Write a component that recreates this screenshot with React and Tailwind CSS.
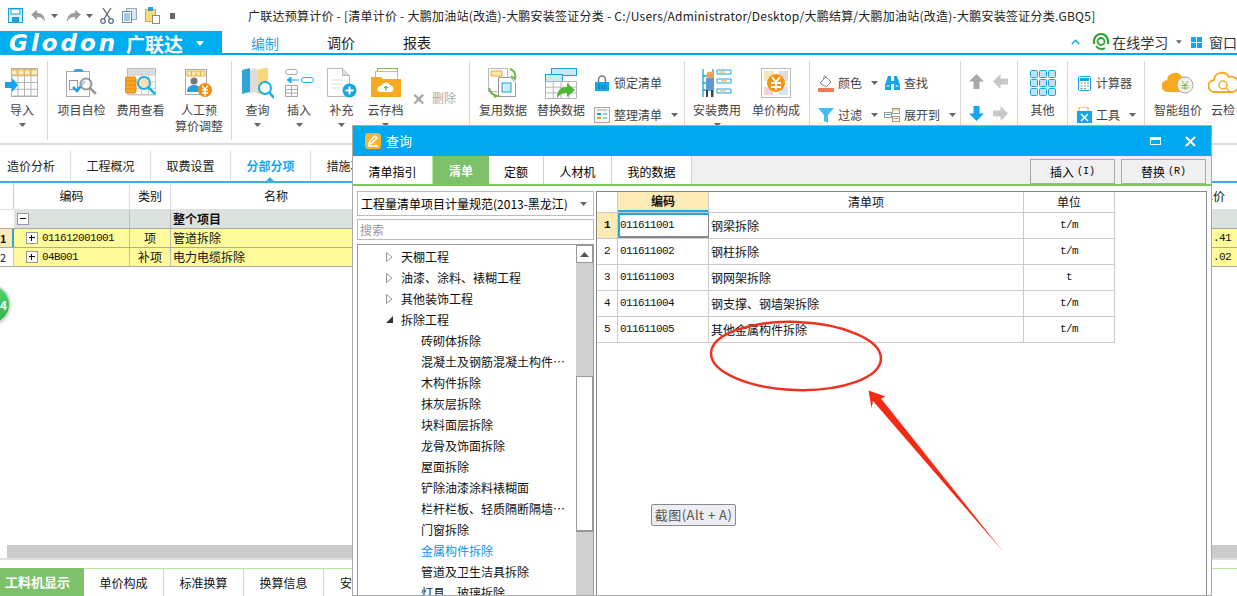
import React from 'react';

const cjk = { fontFamily: '"Noto Sans CJK SC", "Liberation Sans", sans-serif' };

const Caret = ({ className = '' }) => (
    <svg width="7" height="4" viewBox="0 0 7 4" className={className}><path d="M0 0h7L3.5 4z" fill="#666" /></svg>
);

// toolbar icons
const SaveIcon = () => (
    <svg width="15" height="15" viewBox="0 0 15 15"><rect x=".5" y=".5" width="14" height="14" fill="#d8f0fb" stroke="#19a3d8" /><rect x="3" y="1" width="9" height="5" fill="#fff" stroke="#19a3d8" /><rect x="4" y="9" width="7" height="5" fill="#19a3d8" /></svg>
);
const UndoIcon = ({ flip }) => (
    <svg width="15" height="12" viewBox="0 0 15 12" style={flip ? { transform: 'scaleX(-1)' } : undefined}><path d="M0 4.5 6 0v3c5 0 8 3 8 9-2-4-4-5-8-5v3z" fill="#9b9b9b" /></svg>
);
const ScissorsIcon = () => (
    <svg width="14" height="16" viewBox="0 0 14 16" fill="none" stroke="#56708f" strokeWidth="1.3"><path d="M3 0l7 11M11 0 4 11" stroke="#666" /><circle cx="3" cy="13" r="2.3" /><circle cx="11" cy="13" r="2.3" /></svg>
);
const CopyIcon = () => (
    <svg width="15" height="15" viewBox="0 0 15 15"><rect x="4.5" y=".5" width="10" height="11" fill="#d5eaf6" stroke="#9ab" /><rect x=".5" y="3.5" width="9" height="11" fill="#fff" stroke="#888" /><path d="M2 6h6M2 8h6M2 10h6M2 12h6" stroke="#2d9fd8" /></svg>
);
const PasteIcon = () => (
    <svg width="15" height="17" viewBox="0 0 15 17"><rect x=".5" y="2.5" width="10" height="12" fill="#fbd97a" stroke="#e2a730" /><rect x="3" y="0" width="5" height="4" fill="#2d9fd8" /><rect x="7.5" y="8.5" width="7" height="8" fill="#fff" stroke="#888" /></svg>
);

const GridLines = ({ x, y, w, h, cols, rows, stroke = '#b5b5b5' }) => {
    const lines = [];
    for (let i = 0; i <= cols; i++) lines.push(<path key={`c${i}`} d={`M${x + (w / cols) * i} ${y}v${h}`} stroke={stroke} />);
    for (let i = 0; i <= rows; i++) lines.push(<path key={`r${i}`} d={`M${x} ${y + (h / rows) * i}h${w}`} stroke={stroke} />);
    return <g>{lines}</g>;
};

const Magnifier = ({ cx, cy, r = 6, color = '#1ab0ec' }) => (
    <g fill="none"><circle cx={cx} cy={cy} r={r} stroke={color} strokeWidth="2" fill="#fff" fillOpacity=".6" /><path d={`M${cx + r * 0.7} ${cy + r * 0.7}l6 6`} stroke={color} strokeWidth="2.5" /></g>
);

const ImportIcon = () => (
    <svg width="34" height="30" viewBox="0 0 34 30"><rect x="6.5" y=".5" width="26" height="28" fill="#fff" stroke="#a8a8a8" /><rect x="7" y="1" width="25" height="7" fill="#fdeec0" /><GridLines x={6.5} y={1} w={26} h={27} cols={4} rows={4} /><path d="M7 2h25M12 2v5M19 2v5M25 2v5M7 7h25" stroke="#f0b040" /><path d="M0 14h7v-4l6 7-6 7v-4H0z" fill="#12a4ee" /></svg>
);
const CheckIcon = () => (
    <svg width="32" height="30" viewBox="0 0 32 30"><rect x=".5" y="3.5" width="23" height="25" fill="#fff" stroke="#aaa" /><path d="M9 1h7l2 3H7z" fill="#3aa8dc" /><rect x="3.5" y="12.5" width="8" height="9" fill="none" stroke="#999" /><path d="M7 19l4 4 8-10" stroke="#14a0dc" strokeWidth="2.5" fill="none" /><Magnifier cx={20} cy={16} r={5.5} color="#999" /></svg>
);
const FeeIcon = () => (
    <svg width="32" height="30" viewBox="0 0 32 30"><rect x="2.5" y=".5" width="28" height="26" fill="#fff" stroke="#bbb" /><rect x="3" y="1" width="27" height="6" fill="#ddd" /><GridLines x={2.5} y={7} w={28} h={20} cols={4} rows={3} stroke="#ccc" /><rect x="0" y="9" width="11" height="16" rx="2" fill="#f7a823" stroke="#dd8a10" /><path d="M0 13h11M0 17h11M0 21h11" stroke="#dd8a10" /><circle cx="19" cy="15" r="6" fill="#ffe0b0" stroke="#1ab0ec" strokeWidth="2" /><path d="M23 19l7 7" stroke="#1ab0ec" strokeWidth="2.5" /></svg>
);
const LaborIcon = () => (
    <svg width="28" height="30" viewBox="0 0 28 30"><rect x=".5" y="1.5" width="21" height="25" fill="#fff" stroke="#aaa" /><path d="M2 3h18v5H2z" fill="#fde8b0" /><GridLines x={2} y={3} w={18} h={5} cols={4} rows={1} stroke="#eeb040" /><circle cx="9" cy="13" r="3.5" fill="#777" /><path d="M2 24c0-5 3-7 7-7s7 2 7 7z" fill="#2b9fd8" /><circle cx="20" cy="22" r="7" fill="#f58a12" /><path d="M17 17.500l3 4 3-4M17 22h6M17 25h6M20 21v7" stroke="#fff" strokeWidth="1.300" fill="none" /></svg>
);
const QueryIcon = () => (
    <svg width="32" height="32" viewBox="0 0 32 32"><path d="M0 3l8-2v24l-8 2z" fill="#2ca7d8" /><path d="M8 3c3-2 6-2 8 0v24c-2-2-5-2-8 0z" fill="#ddd" /><path d="M16 3c3-2 7-2 10-2v25c-3 0-7 0-10 1z" fill="#fad77a" /><circle cx="23" cy="21" r="6" fill="#fff" stroke="#1ab0ec" strokeWidth="2" /><path d="M27 25l5 6" stroke="#1ab0ec" strokeWidth="2.5" /></svg>
);
const InsertIcon = () => (
    <svg width="30" height="30" viewBox="0 0 30 30"><rect x="1.500" y="1.500" width="12" height="5" rx="2.500" fill="#fff" stroke="#aaa" /><rect x="17.500" y="9.500" width="12" height="5" rx="2.500" fill="#fff" stroke="#1ab0ec" /><path d="M15 12H7V9l-4 3 4 3v-3" fill="#1ab0ec" stroke="#1ab0ec" /><rect x="1.500" y="17.500" width="12" height="11" fill="#fff" stroke="#aaa" /><path d="M1.500 21.500h12M1.500 25h12M7.500 17.500v11" stroke="#aaa" /></svg>
);
const AddIcon = () => (
    <svg width="30" height="30" viewBox="0 0 30 30"><path d="M.5.5h15l7 7v21H.5z" fill="#fff" stroke="#bbb" /><path d="M15.500.5v7h7" fill="#ddd" stroke="#bbb" /><path d="M4 12h12M4 16h12M4 20h8" stroke="#ddd" /><circle cx="22.500" cy="22.500" r="7" fill="#18a5e4" /><path d="M18.500 22.500h8M22.500 18.500v8" stroke="#fff" strokeWidth="2" /></svg>
);
const CloudFolderIcon = () => (
    <svg width="30" height="30" viewBox="0 0 30 30"><rect x="6.500" y=".5" width="20" height="12" fill="#fff" stroke="#8bb04c" /><rect x="4.500" y="3.500" width="22" height="12" fill="#fff" stroke="#e2c050" /><path d="M0 9h10l2 2h18v18H0z" fill="#f7aa20" /><path d="M9 24a3 3 0 0 1 1-6 5 5 0 0 1 9-1 4 4 0 0 1 2 7z" fill="#fff" /><path d="M15 23v-5M13 20l2-2 2 2" stroke="#3aa83a" fill="none" /></svg>
);
const ReuseIcon = () => (
    <svg width="30" height="30" viewBox="0 0 30 30"><rect x=".5" y=".5" width="19" height="23" fill="#fff" stroke="#bbb" /><path d="M3 3h11v5H3z" fill="#fde8b0" stroke="#eeaa30" /><path d="M10.500 9.500h12l5 5v14h-17z" fill="#fff" stroke="#999" /><rect x="14" y="15" width="9" height="9" fill="#cdeefc" stroke="#18a0dc" /><path d="M22 1c5 2 6 6 5 10l-4-3" fill="none" stroke="#6cb84a" strokeWidth="2" /><path d="M1 20c1 5 4 7 8 8l-3 1" fill="none" stroke="#6cb84a" strokeWidth="2" /></svg>
);
const ReplaceIcon = () => (
    <svg width="32" height="31" viewBox="0 0 32 31"><rect x="6.500" y=".5" width="25" height="7" fill="#c5ecfb" stroke="#18a0dc" /><rect x=".5" y="6.500" width="17" height="7" fill="#c5ecfb" stroke="#18a0dc" /><GridLines x={.5} y={13.500} w={31} h={17} cols={4} rows={3} stroke="#b5b5b5" /><path d="M12 30c0-8 4-11 10-11v-4l8 7-8 7v-4c-4 0-7 1-10 5z" fill="#4cb534" /></svg>
);
const LockIcon = () => (
    <svg width="14" height="16" viewBox="0 0 14 16"><path d="M3.500 7V4.500a3.500 3.500 0 0 1 7 0V7" fill="none" stroke="#777" strokeWidth="1.500" /><rect y="7" width="14" height="9" fill="#12a8ee" /><path d="M3 11h8M3 13h8" stroke="#0b6fa0" strokeDasharray="2 1" /></svg>
);
const TidyIcon = () => (
    <svg width="16" height="16" viewBox="0 0 16 16"><rect x=".5" y=".5" width="15" height="15" fill="#f7f7f0" stroke="#aaa" /><path d="M3 3h10" stroke="#aaa" /><rect x="3" y="6" width="4" height="2" fill="#18a0dc" /><rect x="3" y="10" width="4" height="2" fill="#f0a020" /><path d="M9 7h4M9 11h4" stroke="#18a0dc" /></svg>
);
const InstallIcon = () => (
    <svg width="30" height="30" viewBox="0 0 30 30"><path d="M1 1v28M11 1v28M1 8h10M1 15h10M1 22h10" stroke="#18a5e4" strokeWidth="1.300" /><circle cx="8" cy="7" r="3.500" fill="#f0a050" /><rect x="4" y="10" width="8" height="12" fill="#5b9bd0" /><path d="M5 22v7M10 22v7" stroke="#345" strokeWidth="2" /><path d="M15 2h14v4H15zM15 11h14v4H15zM15 21h14v4H15z" fill="#fff" stroke="#18a5e4" /><path d="M17 4h6M19 13h6M18 23h6" stroke="#f0a020" /></svg>
);
const PriceIcon = () => (
    <svg width="30" height="30" viewBox="0 0 30 30"><rect x=".5" y=".5" width="29" height="29" fill="#fff" stroke="#bbb" /><rect x="3" y="3" width="10" height="10" fill="#f2e8c0" /><rect x="18" y="3" width="9" height="10" fill="#dcdcdc" /><rect x="3" y="19" width="9" height="8" fill="#f4d4d0" /><rect x="18" y="19" width="9" height="8" fill="#cfe6f4" /><circle cx="15" cy="15" r="9" fill="#f7920f" /><path d="M11 9l4 5 4-5M10 15h10M10 19h10M15 14v8" stroke="#fff" strokeWidth="1.800" fill="none" /></svg>
);
const BucketIcon = () => (
    <svg width="16" height="17" viewBox="0 0 16 17"><path d="M2 8l6-6 5 5-5 5z" fill="#fff" stroke="#888" /><path d="M8 2C7 0 5 1 6 4" stroke="#888" fill="none" /><rect y="13" width="16" height="4" fill="#f07b52" /></svg>
);
const BinocularIcon = () => (
    <svg width="15" height="14" viewBox="0 0 15 14"><path d="M3 0h3v5h3V0h3l3 9v5H9V8H6v6H0V9z" fill="#18a5e4" /><path d="M1.500 10h3M10.500 10h3" stroke="#fff" /></svg>
);
const FilterIcon = () => (
    <svg width="16" height="15" viewBox="0 0 16 15"><path d="M0 0h16l-6 7v8l-4-2V7z" fill="#44c0ee" /></svg>
);
const ExpandIcon = () => (
    <svg width="16" height="14" viewBox="0 0 16 14"><rect x="8.500" y=".5" width="7" height="5" fill="#fff" stroke="#999" /><rect x=".5" y="4.500" width="7" height="5" fill="#fff" stroke="#999" /><rect x="8.500" y="8.500" width="7" height="5" fill="#fff" stroke="#999" /><path d="M9.500 2h5M9.500 10.500h5" stroke="#f0a020" /><path d="M1.500 6.500h5" stroke="#18a5e4" /></svg>
);
const ArrowIcon = ({ dir, color }) => {
    const rotate = { up: 'rotate-0', down: 'rotate-180', left: '-rotate-90', right: 'rotate-90' }[dir];
    return <svg width="15" height="15" viewBox="0 0 15 15" className={rotate}><path d="M7.500 0 15 7.500h-4.500V15h-6V7.500H0z" fill={color} /></svg>;
};
const OtherIcon = () => (
    <svg width="26" height="26" viewBox="0 0 26 26">
        {[0, 9, 18].map(y => [0, 9, 18].map(x => (
            <rect key={`${x}-${y}`} x={x + .5} y={y + .5} width="7" height="7" rx="1" fill="#bfe4f6" stroke="#18a5e4" />
        )))}
    </svg>
);
const CalcIcon = () => (
    <svg width="13" height="15" viewBox="0 0 13 15"><rect x=".5" y=".5" width="12" height="14" rx="1" fill="#fff" stroke="#18a5e4" /><rect x="2" y="2" width="9" height="3" fill="#18a5e4" /><path d="M2.500 7h2M6 7h2M9 7h2M2.500 10h2M6 10h2M9 10h2M2.500 12.500h2M6 12.500h2" stroke="#888" /></svg>
);
const ToolIcon = () => (
    <svg width="15" height="16" viewBox="0 0 15 16"><rect x="2" y="0" width="9" height="6" fill="#fff" stroke="#f0a020" /><rect y="4" width="15" height="12" fill="#18a5e4" /><path d="M4 7l7 7M11 7l-7 7" stroke="#fff" strokeWidth="1.500" /></svg>
);
const CloudYenIcon = () => (
    <svg width="32" height="24" viewBox="0 0 32 24"><path d="M6 21a6 6 0 0 1-1-12 8 8 0 0 1 15-3 7 7 0 0 1 4 15z" fill="#f7aa20" /><circle cx="23" cy="14" r="8" fill="#f2f2ea" stroke="#aaa" /><path d="M20 10l3 4 3-4M19.500 14.500h7M19.500 17h7M23 14v5" stroke="#7ab648" fill="none" /></svg>
);
const CloudCheckIcon = () => (
    <svg width="30" height="24" viewBox="0 0 30 24" fill="none"><path d="M7 21a6 6 0 0 1-1-12 8 8 0 0 1 15-3 7 7 0 0 1 4 15z" stroke="#f7aa20" strokeWidth="1.800" /><circle cx="15" cy="14" r="4" stroke="#f7aa20" strokeWidth="1.500" /><path d="M18 17l4 4" stroke="#f7aa20" strokeWidth="1.500" /></svg>
);
const HeadsetIcon = () => (
    <svg width="18" height="18" viewBox="0 0 18 18" fill="none"><path d="M2 11V8a7 7 0 0 1 14 0v3" stroke="#2fa52f" strokeWidth="2.200" /><circle cx="9" cy="8.500" r="3.500" stroke="#2fa52f" strokeWidth="1.800" /><path d="M4 13c2 3 6 4 9 2" stroke="#2fa52f" strokeWidth="2" /></svg>
);
const WindowsIcon = () => (
    <svg width="11" height="11" viewBox="0 0 11 11"><path d="M0 0h5v5H0zM6 0h5v5H6zM0 6h5v5H0zM6 6h5v5H6z" fill="#12a4ee" /></svg>
);

const Large = ({ icon, label, label2, caret, w }) => (
    <div className={`${w} flex flex-col items-center shrink-0`}>
        <div className="h-[36px] flex items-center justify-center">{icon}</div>
        <div className="text-[12px] leading-[16px] mt-[1px] text-[#444] whitespace-nowrap">{label}</div>
        {label2 && <div className="text-[12px] leading-[16px] text-[#444] whitespace-nowrap">{label2}</div>}
        {caret && <Caret className="mt-[5px]" />}
    </div>
);

const Small = ({ icon, label, caret, w }) => (
    <div className={`${w} h-[24px] flex items-center text-[12px] text-[#444] whitespace-nowrap`}>
        <div className="w-[18px] flex justify-center shrink-0">{icon}</div>
        <span className="ml-[3px]">{label}</span>
        {caret && <Caret className="ml-[9px]" />}
    </div>
);

const Group = ({ w, children }) => (
    <div className={`${w} h-[79px] border-r border-[#d8d8d8] flex shrink-0 mt-[6px] pt-[4px]`}>{children}</div>
);

const Ribbon = () => (
    <div className="h-[90px] flex border-b-2 border-[#dcdcdc] shrink-0">
        <Group w="w-[48px]"><Large w="w-[44px]" icon={<ImportIcon />} label="导入" caret /></Group>
        <Group w="w-[184px]">
            <div className="w-[4px]" />
            <Large w="w-[59px]" icon={<CheckIcon />} label="项目自检" />
            <Large w="w-[59px]" icon={<FeeIcon />} label="费用查看" />
            <Large w="w-[58px]" icon={<LaborIcon />} label="人工预" label2="算价调整" />
        </Group>
        <Group w="w-[238px]">
            <div className="w-[5px]" />
            <Large w="w-[41px]" icon={<QueryIcon />} label="查询" caret />
            <Large w="w-[42px]" icon={<InsertIcon />} label="插入" caret />
            <Large w="w-[43px]" icon={<AddIcon />} label="补充" caret />
            <Large w="w-[45px]" icon={<CloudFolderIcon />} label="云存档" caret />
            <div className="pl-[4px] pt-[16px] h-[50px] flex items-center text-[12px] text-[#aaa] whitespace-nowrap">
                <span className="text-[16px] font-bold text-[#aaa] leading-none mr-[7px]">✕</span>删除
            </div>
        </Group>
        <Group w="w-[215px]">
            <div className="w-[4px]" />
            <Large w="w-[58px]" icon={<ReuseIcon />} label="复用数据" />
            <Large w="w-[58px]" icon={<ReplaceIcon />} label="替换数据" />
            <div className="flex flex-col gap-[8px] pt-[6px] pl-[3px]">
                <Small w="w-[90px]" icon={<LockIcon />} label="锁定清单" />
                <Small w="w-[90px]" icon={<TidyIcon />} label="整理清单" caret />
            </div>
        </Group>
        <Group w="w-[125px]">
            <div className="w-[3px]" />
            <Large w="w-[58px]" icon={<InstallIcon />} label="安装费用" caret />
            <Large w="w-[60px]" icon={<PriceIcon />} label="单价构成" />
        </Group>
        <Group w="w-[151px]">
            <div className="w-[7px]" />
            <div className="flex flex-col gap-[8px] pt-[6px]">
                <Small w="w-[66px]" icon={<BucketIcon />} label="颜色" caret />
                <Small w="w-[66px]" icon={<FilterIcon />} label="过滤" caret />
            </div>
            <div className="flex flex-col gap-[8px] pt-[6px]">
                <Small w="w-[76px]" icon={<BinocularIcon />} label="查找" />
                <Small w="w-[76px]" icon={<ExpandIcon />} label="展开到" caret />
            </div>
        </Group>
        <Group w="w-[57px]">
            <div className="grid grid-cols-2 gap-x-[9px] gap-y-[17px] pl-[8px] pt-[9px] h-fit">
                <ArrowIcon dir="up" color="#a8a8a8" />
                <ArrowIcon dir="left" color="#c8c8c8" />
                <ArrowIcon dir="down" color="#12a4ee" />
                <ArrowIcon dir="right" color="#c8c8c8" />
            </div>
        </Group>
        <Group w="w-[50px]"><Large w="w-[49px]" icon={<OtherIcon />} label="其他" /></Group>
        <Group w="w-[77px]">
            <div className="w-[7px]" />
            <div className="flex flex-col gap-[8px] pt-[6px]">
                <Small w="w-[68px]" icon={<CalcIcon />} label="计算器" />
                <Small w="w-[68px]" icon={<ToolIcon />} label="工具" caret />
            </div>
        </Group>
        <div className="flex mt-[6px] pt-[4px] pl-[4px]">
            <Large w="w-[58px]" icon={<CloudYenIcon />} label="智能组价" />
            <Large w="w-[32px]" icon={<CloudCheckIcon />} label="云检" />
        </div>
    </div>
);

const sheetTabs = ['造价分析', '工程概况', '取费设置', '分部分项', '措施项目'];

const Plus = ({ minus }) => (
    <span className="w-[12px] h-[12px] border border-[#999] bg-white relative shrink-0 block">
        <span className="absolute left-[2px] top-[4px] w-[6px] h-[1px] bg-black" />
        {!minus && <span className="absolute left-[4px] top-[2px] w-[1px] h-[6px] bg-black" />}
    </span>
);

const monoNum = 'font-["Liberation_Mono"] text-[11px] tracking-[-0.6px]';

const MainTable = () => (
    <div className="flex-1 text-[12px] text-[#111]">
        <div className="h-[27px] flex border-b border-[#e0e0e0]">
            <div className="w-[14px] border-r border-[#ccc]" />
            <div className="w-[116px] border-r border-[#ddd] flex items-center justify-center">编码</div>
            <div className="w-[41px] border-r border-[#ddd] flex items-center justify-center">类别</div>
            <div className="w-[210px] flex items-center justify-center">名称</div>
            <div className="flex-1 flex items-center justify-end pr-[12px]">单价</div>
        </div>
        <div className="h-[19px] flex border-b border-[#aaa] bg-[#dce3df]">
            <div className="w-[14px] bg-white" />
            <div className="w-[116px] border-r border-[#bbb] flex items-center pl-[3px]"><Plus minus /></div>
            <div className="w-[41px] border-r border-[#bbb]" />
            <div className="flex-1 pl-[2px] font-bold flex items-center">整个项目</div>
        </div>
        <div className="h-[19px] flex border-b border-[#aaa] bg-[#fffb9a]">
            <div className="w-[14px] bg-[#fdeab5] border-r-2 border-[#2aa5dc] font-bold flex items-center text-[11px]">1</div>
            <div className="w-[116px] border-r border-[#bbb] flex items-center pl-[12px]"><Plus /><span className={`ml-[4px] ${monoNum}`}>011612001001</span></div>
            <div className="w-[41px] border-r border-[#bbb] text-center leading-[18px]">项</div>
            <div className="flex-1 pl-[2px] leading-[18px]">管道拆除</div>
            <div className={`pr-[6px] leading-[18px] ${monoNum}`}>.41</div>
        </div>
        <div className="h-[19px] flex border-b border-[#aaa] bg-[#fffb9a]">
            <div className="w-[14px] bg-white border-r border-[#ccc] flex items-center text-[11px]">2</div>
            <div className="w-[116px] border-r border-[#bbb] flex items-center pl-[12px]"><Plus /><span className={`ml-[4px] ${monoNum}`}>04B001</span></div>
            <div className="w-[41px] border-r border-[#bbb] text-center leading-[18px]">补项</div>
            <div className="flex-1 pl-[2px] leading-[18px]">电力电缆拆除</div>
            <div className={`pr-[6px] leading-[18px] ${monoNum}`}>.02</div>
        </div>
    </div>
);

const treeItems = [
    { t: '天棚工程', k: 'closed' },
    { t: '油漆、涂料、裱糊工程', k: 'closed' },
    { t: '其他装饰工程', k: 'closed' },
    { t: '拆除工程', k: 'open' },
    { t: '砖砌体拆除' },
    { t: '混凝土及钢筋混凝土构件…' },
    { t: '木构件拆除' },
    { t: '抹灰层拆除' },
    { t: '块料面层拆除' },
    { t: '龙骨及饰面拆除' },
    { t: '屋面拆除' },
    { t: '铲除油漆涂料裱糊面' },
    { t: '栏杆栏板、轻质隔断隔墙…' },
    { t: '门窗拆除' },
    { t: '金属构件拆除', active: true },
    { t: '管道及卫生洁具拆除' },
    { t: '灯具、玻璃拆除' },
];

const TreeRow = ({ item }) => (
    <div className={`h-[21px] flex items-center whitespace-nowrap ${item.k ? 'pl-[28px]' : 'pl-[63px]'} ${item.active ? 'text-[#1090f0]' : 'text-[#111]'}`}>
        {item.k === 'closed' && <svg width="7" height="10" viewBox="0 0 7 10" className="mr-[8px] ml-[0px]"><path d="M.5.5 6 5 .5 9.500z" fill="#fff" stroke="#999" /></svg>}
        {item.k === 'open' && <svg width="7" height="7" viewBox="0 0 7 7" className="mr-[8px]"><path d="M7 0v7H0z" fill="#333" /></svg>}
        {item.t}
    </div>
);

const rows = [
    ['1', '011611001', '钢梁拆除', 't/m'],
    ['2', '011611002', '钢柱拆除', 't/m'],
    ['3', '011611003', '钢网架拆除', 't'],
    ['4', '011611004', '钢支撑、钢墙架拆除', 't/m'],
    ['5', '011611005', '其他金属构件拆除', 't/m'],
];

const QueryDialog = () => (
    <div className="absolute left-[352px] top-[125px] w-[860px] h-[471px] border border-[#aaa] bg-[#f0f0f0] flex flex-col text-[12px]" style={cjk}>
        <div className="h-[30px] bg-[#00a8f0] flex items-center shrink-0 text-white">
            <svg width="16" height="16" viewBox="0 0 16 16" className="ml-[12px]"><rect width="16" height="16" rx="3" fill="#f9b233" /><path d="M4 11l1-3 5-5 2 2-5 5zM3 13h10" stroke="#fff" strokeWidth="1.500" fill="none" /></svg>
            <span className="ml-[5px] text-[13px]">查询</span>
            <div className="flex-1" />
            <span className="w-[11px] h-[8px] border border-white border-t-[3px]" />
            <svg width="11" height="11" viewBox="0 0 11 11" className="ml-[24px] mr-[15px]"><path d="M1 1l9 9M10 1l-9 9" stroke="#fff" strokeWidth="2" /></svg>
        </div>
        <div className="h-[30px] flex border-b-2 border-[#7dc75f] shrink-0">
            <div className="w-[80px] pt-[3px] bg-white border-r border-[#b5e6a2] flex items-center justify-center">清单指引</div>
            <div className="w-[56px] pt-[1px] bg-[#7dc16a] text-white font-bold flex items-center justify-center">清单</div>
            <div className="w-[55px] pt-[3px] bg-white border-r border-[#b5e6a2] flex items-center justify-center">定额</div>
            <div className="w-[68px] pt-[3px] bg-white border-r border-[#b5e6a2] flex items-center justify-center">人材机</div>
            <div className="w-[80px] pt-[3px] bg-white border-r border-[#b5e6a2] flex items-center justify-center">我的数据</div>
            <div className="flex-1" />
            <button className="w-[85px] h-[25px] mt-[3px] border border-[#aaa] flex items-center justify-center">插入<span className="ml-[3px] font-['Liberation_Mono'] text-[10px]">(I)</span></button>
            <button className="w-[85px] h-[25px] mt-[3px] ml-[6px] mr-[5px] border border-[#aaa] flex items-center justify-center">替换<span className="ml-[3px] font-['Liberation_Mono'] text-[10px]">(R)</span></button>
        </div>
        <div className="flex-1 flex min-h-0 bg-white pl-[4px] pr-[4px] pt-[5px] gap-[2px]">
            <div className="w-[237px] flex flex-col min-h-0">
                <div className="h-[25px] border border-[#bbb] flex items-center pl-[3px] pr-[6px] shrink-0 whitespace-nowrap">
                    工程量清单项目计量规范(2013-黑龙江)
                    <div className="flex-1" /><Caret />
                </div>
                <div className="h-[21px] mt-[3px] border border-[#bbb] flex items-center pl-[2px] text-[#999] shrink-0">搜索</div>
                <div className="flex-1 mt-[4px] border border-[#999] border-b-0 flex min-h-0 overflow-hidden">
                    <div className="flex-1 pt-[1px]">
                        {treeItems.map(item => <TreeRow key={item.t} item={item} />)}
                    </div>
                    <div className="w-[17px] bg-[#d0d0d0] flex flex-col shrink-0">
                        <div className="h-[18px] bg-white border border-[#999] flex items-center justify-center shrink-0">
                            <svg width="9" height="5" viewBox="0 0 9 5"><path d="M4.500 0 9 5H0z" fill="#555" /></svg>
                        </div>
                        <div className="mt-[113px] h-[156px] bg-white border border-[#999] border-b-2" />
                    </div>
                </div>
            </div>
            <div className="flex-1 border border-[#888] border-b-0 text-[#111]">
                <div className="flex h-[21px] border-b border-[#ccc] w-[518px]">
                    <div className="w-[21px] border-r border-[#ccc]" />
                    <div className="w-[91px] bg-[#fdeab5] border-r border-[#ccc] border-b-2 border-b-[#2aa5dc] font-bold flex items-center justify-center">编码</div>
                    <div className="w-[315px] border-r border-[#ccc] flex items-center justify-center">清单项</div>
                    <div className="w-[91px] border-r border-[#ccc] flex items-center justify-center">单位</div>
                </div>
                {rows.map(r => (
                    <div key={r[0]} className="flex h-[26px] border-b border-[#ccc] w-[518px]">
                        <div className={`w-[21px] border-r border-[#ccc] flex items-center justify-center ${monoNum} ${r[0] === '1' ? 'bg-[#fdeab5] font-bold' : ''}`}>{r[0]}</div>
                        <div className={`w-[91px] border-r border-[#ccc] flex items-center ${monoNum} ${r[0] === '1' ? 'border-2 border-l-[#2aa5dc] border-t-[#2aa5dc] border-r-[#888] border-b-[#888]' : 'pl-[2px]'}`}>{r[1]}</div>
                        <div className="w-[315px] border-r border-[#ccc] flex items-center pl-[2px]">{r[2]}</div>
                        <div className={`w-[91px] border-r border-[#ccc] flex items-center justify-center ${monoNum}`}>{r[3]}</div>
                    </div>
                ))}
            </div>
        </div>
    </div>
);

const App = () => (
    <div className="relative w-[1237px] h-[596px] overflow-hidden bg-white flex flex-col text-[12px]" style={cjk}>
        {/* title bar */}
        <div className="h-[31px] flex items-center shrink-0 relative">
            <div className="flex items-center pl-[8px] w-[248px]">
                <SaveIcon />
                <div className="ml-[8px]"><UndoIcon /></div>
                <Caret className="ml-[5px]" />
                <div className="ml-[8px]"><UndoIcon flip /></div>
                <Caret className="ml-[5px]" />
                <div className="ml-[7px]"><ScissorsIcon /></div>
                <div className="ml-[8px]"><CopyIcon /></div>
                <div className="ml-[8px]"><PasteIcon /></div>
                <span className="ml-[10px] w-[5px] h-[6px] bg-[#666] block" />
            </div>
            <span className="text-[#222] whitespace-nowrap text-[12px] tracking-[0.24px]">广联达预算计价 - [清单计价 - 大鹏加油站(改造)-大鹏安装签证分类 - C:/Users/Administrator/Desktop/大鹏结算/大鹏加油站(改造)-大鹏安装签证分类.GBQ5]</span>
        </div>

        {/* logo and menu tabs */}
        <div className="h-[24px] flex shrink-0 border-b-2 border-[#00a8e8]">
            <div className="w-[222px] h-[24px] bg-[#00aef0] flex items-center text-white shrink-0">
                <span className="ml-[9px] text-[23px] leading-none font-bold italic tracking-[3px] font-['DejaVu_Sans'] w-[117px]">Glodon</span>
                <span className="text-[19px] font-bold leading-none">广联达</span>
                <svg width="8" height="5" viewBox="0 0 8 5" className="ml-[13px]"><path d="M0 0h8L4 5z" fill="#fff" /></svg>
            </div>
            <div className="flex text-[14px] ml-[5px]">
                <div className="w-[76px] h-[24px] flex items-center justify-center text-[#2ca6e0]">编制</div>
                <div className="w-[76px] flex items-center justify-center text-[#222]">调价</div>
                <div className="w-[76px] flex items-center justify-center text-[#222]">报表</div>
            </div>
            <div className="flex-1" />
            <div className="flex items-center text-[#333] text-[14px] whitespace-nowrap w-[166px] shrink-0 overflow-hidden">
                <svg width="11" height="6" viewBox="0 0 11 6" fill="none"><path d="M1 5.500l4.500-4.500L10 5.500" stroke="#12a4ee" strokeWidth="1.800" /></svg>
                <span className="ml-[12px]"><HeadsetIcon /></span>
                <span className="ml-[2px]">在线学习</span>
                <Caret className="ml-[8px]" />
                <span className="ml-[9px]"><WindowsIcon /></span>
                <span className="ml-[7px]">窗口</span>
            </div>
        </div>

        <Ribbon />
        <div className="h-[5px] shrink-0" />

        {/* sheet tabs */}
        <div className="h-[33px] flex border-b-2 border-[#3db0e0] shrink-0 relative">
            {sheetTabs.map((t, i) => (
                <div key={t} className={`${i === 0 ? 'w-[71px] pr-[8px]' : 'w-[80px]'} border-r border-[#ddd] flex items-center justify-center text-[12px] relative ${t === '分部分项' ? 'text-[#1ca6ea] font-bold' : 'text-[#222]'}`}>
                    {t}
                    {t === '分部分项' && <span className="absolute bottom-0 left-[35px] w-0 h-0 border-x-[4px] border-x-transparent border-b-[4px] border-b-[#3db0e0]" />}
                </div>
            ))}
        </div>

        <MainTable />

        {/* bottom scrollbar */}
        <div className="h-[15px] bg-[#cbcbcb] border-b-2 border-[#e0e0e0] shrink-0 flex">
            <div className="w-[7px] bg-white" />
        </div>

        {/* bottom tabs */}
        <div className="h-[28px] mt-[8px] flex border-t border-[#b5e6a2] shrink-0 text-[12px] text-[#111]">
            <div className="w-[84px] bg-[#7dc16a] text-white font-bold text-[13px] flex items-center pl-[5px] -mt-[1px]">工料机显示</div>
            <div className="w-[80px] border-r border-[#b5e6a2] flex items-center justify-center">单价构成</div>
            <div className="w-[80px] border-r border-[#b5e6a2] flex items-center justify-center">标准换算</div>
            <div className="w-[80px] border-r border-[#b5e6a2] flex items-center justify-center">换算信息</div>
            <div className="pl-[16px] flex items-center">安</div>
        </div>

        {/* floating green badge */}
        <div className="absolute left-[-30px] top-[284px] w-[41px] h-[41px] rounded-full bg-linear-to-b from-[#4ed86a] to-[#2fb24a] border-2 border-[#d8d8d8] flex items-center justify-end pr-[2px] text-white font-bold text-[12px] shadow">4</div>

        <QueryDialog />

        {/* screenshot annotations */}
        <svg width="1237" height="596" viewBox="0 0 1237 596" className="absolute left-0 top-0 pointer-events-none">
            <ellipse cx="796" cy="356" rx="85" ry="34" fill="none" stroke="#f03020" strokeWidth="2.500" transform="rotate(2 796 356)" />
            <path d="M868.500 390.500 885.500 396.500 881 398.500 1003 551.500 873 401 871.500 408z" fill="#f52a14" />
        </svg>

        {/* capture tooltip */}
        <div className="absolute left-[651px] top-[504px] w-[85px] h-[22px] border border-[#8a8a8a] rounded-[2px] bg-[#eceef4] text-[#555] flex items-center justify-center text-[13px] tracking-[0.5px] whitespace-nowrap">截图(Alt + A)</div>
    </div>
);

export default App;
